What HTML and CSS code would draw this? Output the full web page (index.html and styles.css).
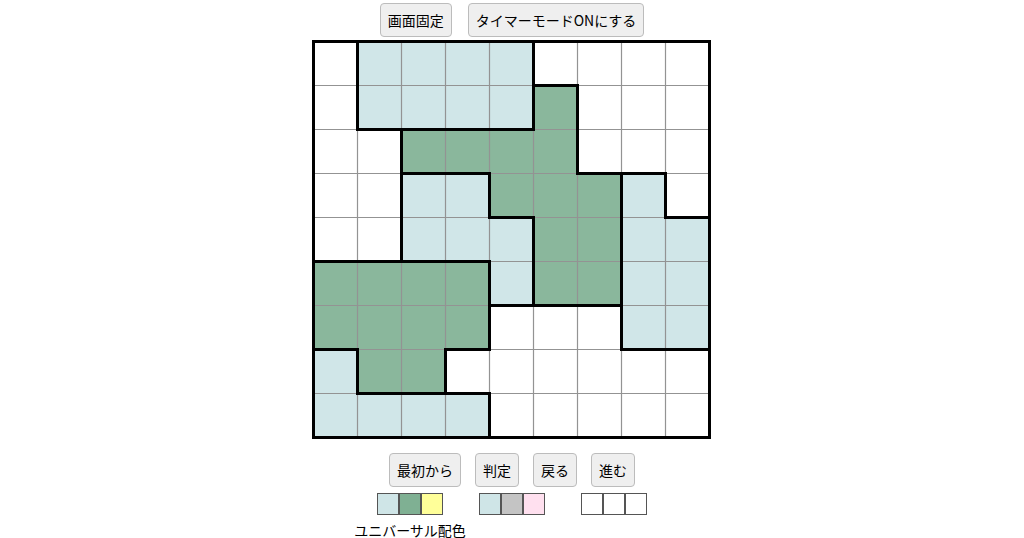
FILE: index.html
```html
<!DOCTYPE html>
<html lang="ja">
<head>
<meta charset="utf-8">
<title>パズル</title>
<link rel="stylesheet" href="styles.css">
</head>
<body>
<main class="page">
  <div class="toolbar toolbar-top">
    <button class="btn">画面固定</button>
    <button class="btn">タイマーモードONにする</button>
  </div>

  <svg class="board" width="400" height="400" viewBox="0 0 400 400">
    <g class="cells-l">
      <rect x="45.5" y="1.5" width="176" height="88"/>
      <rect x="89.5" y="133.5" width="88" height="88"/>
      <rect x="177.5" y="177.5" width="44" height="88"/>
      <rect x="309.5" y="133.5" width="44" height="176"/>
      <rect x="353.5" y="177.5" width="44" height="132"/>
      <rect x="1.5" y="309.5" width="44" height="88"/>
      <rect x="45.5" y="353.5" width="132" height="44"/>
    </g>
    <g class="cells-g">
      <rect x="221.5" y="45.5" width="44" height="88"/>
      <rect x="89.5" y="89.5" width="176" height="44"/>
      <rect x="177.5" y="133.5" width="132" height="44"/>
      <rect x="221.5" y="177.5" width="88" height="88"/>
      <rect x="1.5" y="221.5" width="176" height="88"/>
      <rect x="45.5" y="309.5" width="88" height="44"/>
    </g>
    <path class="thin" d="M45.5 1.5V397.5M89.5 1.5V397.5M133.5 1.5V397.5M177.5 1.5V397.5M221.5 1.5V397.5M265.5 1.5V397.5M309.5 1.5V397.5M353.5 1.5V397.5M1.5 45.5H397.5M1.5 89.5H397.5M1.5 133.5H397.5M1.5 177.5H397.5M1.5 221.5H397.5M1.5 265.5H397.5M1.5 309.5H397.5M1.5 353.5H397.5"/>
    <path class="thick" d="M221.5 45.5H265.5M45.5 89.5H221.5M89.5 133.5H177.5M265.5 133.5H353.5M177.5 177.5H221.5M353.5 177.5H397.5M1.5 221.5H177.5M177.5 265.5H309.5M1.5 309.5H45.5M133.5 309.5H177.5M309.5 309.5H397.5M45.5 353.5H177.5M45.5 1.5V89.5M45.5 309.5V353.5M89.5 89.5V221.5M133.5 309.5V353.5M177.5 133.5V177.5M177.5 221.5V309.5M177.5 353.5V397.5M221.5 1.5V89.5M221.5 177.5V265.5M265.5 45.5V133.5M309.5 133.5V309.5M353.5 133.5V177.5"/>
    <rect class="frame" x="1.5" y="1.5" width="396" height="396"/>
  </svg>

  <div class="toolbar toolbar-bottom">
    <button class="btn">最初から</button>
    <button class="btn">判定</button>
    <button class="btn">戻る</button>
    <button class="btn">進む</button>
  </div>

  <div class="palettes">
    <div class="palette">
      <div class="swatches">
        <span class="swatch sw-blue"></span><span class="swatch sw-green"></span><span class="swatch sw-yellow"></span>
      </div>
      <div class="palette-label">ユニバーサル配色</div>
    </div>
    <div class="palette">
      <div class="swatches">
        <span class="swatch sw-blue"></span><span class="swatch sw-gray"></span><span class="swatch sw-pink"></span>
      </div>
    </div>
    <div class="palette">
      <div class="swatches">
        <span class="swatch sw-white"></span><span class="swatch sw-white"></span><span class="swatch sw-white"></span>
      </div>
    </div>
  </div>
</main>
</body>
</html>
```

FILE: styles.css
```css
html, body {
  margin: 0;
  padding: 0;
  background: #ffffff;
}

body {
  font-family: "Noto Sans CJK JP", "Noto Sans", sans-serif;
  color: #000;
}

.page {
  display: flex;
  flex-direction: column;
  align-items: center;
  padding-top: 3px;
}

.toolbar {
  display: flex;
  justify-content: center;
}

.toolbar-top {
  gap: 16px;
}

.toolbar-bottom {
  gap: 14px;
  margin-top: 13px;
}

.btn {
  height: 34px;
  padding: 0 7px;
  font-family: "Noto Sans CJK JP", "Noto Sans", sans-serif;
  font-size: 14px;
  line-height: 1;
  color: #000;
  background: #efefef;
  border: 1px solid #bcbcbc;
  border-radius: 4px;
}

.board {
  display: block;
  margin-top: 3px;
}

.cells-l rect {
  fill: #d0e6e8;
}

.cells-g rect {
  fill: #8ab79c;
}

.thin {
  fill: none;
  stroke: #939393;
  stroke-width: 1.2;
}

.thick {
  fill: none;
  stroke: #000;
  stroke-width: 3;
  stroke-linecap: square;
}

.frame {
  fill: none;
  stroke: #000;
  stroke-width: 3;
}

.palettes {
  display: flex;
  justify-content: center;
  align-items: flex-start;
  gap: 35px;
  margin-top: 6px;
}

.palette {
  display: flex;
  flex-direction: column;
  align-items: center;
  width: 67px;
}

.swatches {
  display: flex;
}

.swatch {
  display: block;
  width: 20.5px;
  height: 20px;
  border: 1px solid #555;
}

.swatch + .swatch {
  margin-left: -0.5px;
}

.sw-blue { background: #cfe5e7; }
.sw-green { background: #7fb093; }
.sw-yellow { background: #ffff99; }
.sw-gray { background: #c4c4c4; }
.sw-pink { background: #ffe0ef; }
.sw-white { background: #ffffff; }

.palette-label {
  margin-top: 6px;
  font-size: 14px;
  line-height: 18px;
  white-space: nowrap;
}
```
